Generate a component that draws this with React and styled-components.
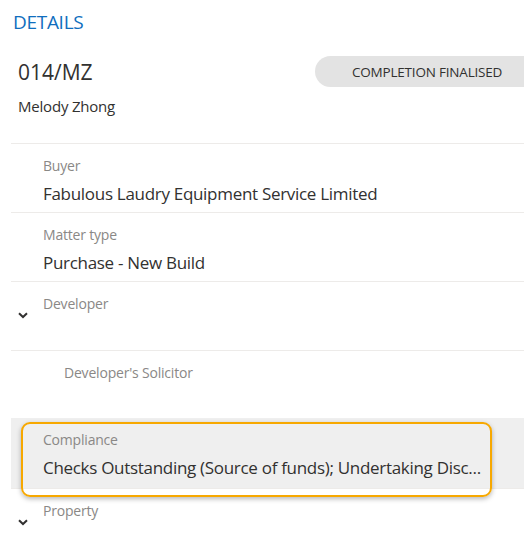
import styled, { createGlobalStyle } from 'styled-components';

const GlobalStyle = createGlobalStyle`
  body {
    margin: 0;
    background: #ffffff;
    font-family: 'Open Sans', 'Noto Sans', sans-serif;
    color: #323130;
  }
`;

const ChevronDown = () => (
  <svg width="10" height="7" viewBox="0 0 10 7">
    <path d="M1 1.2 L5 5 L9 1.2" fill="none" stroke="#323130" strokeWidth="2" />
  </svg>
);

export default function App() {
  return (
    <Panel>
      <GlobalStyle />
      <Title>DETAILS</Title>

      <Header>
        <HeaderText>
          <MatterRef>014/MZ</MatterRef>
          <ClientName>Melody Zhong</ClientName>
        </HeaderText>
        <Badge>COMPLETION FINALISED</Badge>
      </Header>

      <List>
        <Row>
          <Label>Buyer</Label>
          <Value>Fabulous Laudry Equipment Service Limited</Value>
        </Row>
        <Row>
          <Label>Matter type</Label>
          <Value>Purchase - New Build</Value>
        </Row>
        <Row>
          <Toggle><ChevronDown /></Toggle>
          <Label>Developer</Label>
          <Value />
        </Row>
        <Row indent>
          <Label>Developer's Solicitor</Label>
          <Value />
        </Row>
        <FocusRow>
          <Field>
            <Label>Compliance</Label>
            <Value>Checks Outstanding (Source of funds); Undertaking Disc...</Value>
          </Field>
        </FocusRow>
        <Row>
          <Toggle><ChevronDown /></Toggle>
          <Label>Property</Label>
          <Value />
        </Row>
      </List>
    </Panel>
  );
}

const Panel = styled.div`
  width: 524px;
  height: 554px;
  overflow: hidden;
  padding-top: 9px;
  box-sizing: border-box;
`;

const Title = styled.h2`
  margin: 0 0 0 13px;
  font-size: 19px;
  font-weight: 400;
  line-height: 26px;
  color: #106ebe;
  letter-spacing: -0.3px;
`;

const Header = styled.div`
  display: flex;
  align-items: flex-start;
  justify-content: space-between;
  padding: 22px 0 0 18px;
  height: 108px;
  box-sizing: border-box;
`;

const HeaderText = styled.div`
  display: flex;
  flex-direction: column;
`;

const MatterRef = styled.div`
  font-size: 21px;
  line-height: 30px;
  color: #323130;
`;

const ClientName = styled.div`
  font-size: 15px;
  line-height: 20px;
  margin-top: 9px;
  letter-spacing: -0.2px;
`;

const Badge = styled.div`
  margin-top: -1px;
  width: 209px;
  height: 31px;
  border-radius: 16px 0 0 16px;
  background: #e3e3e3;
  display: flex;
  align-items: center;
  padding-left: 37px;
  box-sizing: border-box;
  font-size: 13.5px;
  letter-spacing: -0.2px;
  color: #323130;
  white-space: nowrap;
`;

const List = styled.div`
  margin-left: 11px;
`;

const Row = styled.div`
  position: relative;
  height: 69px;
  box-sizing: border-box;
  border-top: 1px solid #edebe9;
  padding: 12px 0 0 ${(p) => (p.indent ? 53 : 32)}px;
`;

const FocusRow = styled.div`
  height: 70px;
  margin-top: -1px;
  background: #efefef;
  padding-top: 4px;
  box-sizing: border-box;
  position: relative;
  z-index: 1;
`;

const Field = styled.div`
  margin-left: 10px;
  width: 471px;
  height: 75px;
  box-sizing: border-box;
  border: 2px solid #f7a800;
  border-radius: 9px;
  box-shadow: 0 2px 5px rgba(0, 0, 0, 0.28);
  padding: 6px 0 0 20px;
`;

const Toggle = styled.div`
  position: absolute;
  left: 7px;
  top: 30px;
  display: flex;
`;

const Label = styled.div`
  font-size: 14px;
  line-height: 20px;
  color: #8a8886;
  letter-spacing: -0.2px;
`;

const Value = styled.div`
  margin-top: 6px;
  min-height: 24px;
  font-size: 17px;
  line-height: 24px;
  color: #323130;
  letter-spacing: -0.3px;
  white-space: nowrap;
`;
